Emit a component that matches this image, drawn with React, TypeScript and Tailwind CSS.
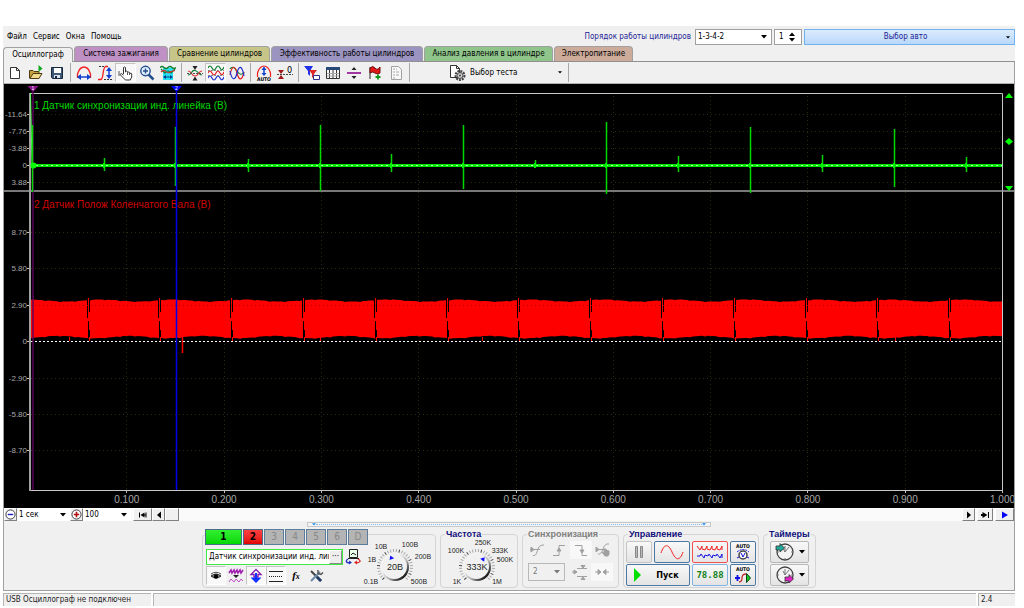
import type { ReactNode } from "react";
import { clsx } from "clsx";

const TABS = [
  { title: "Осциллограф", color: "bg-[#f0f0f0]", width: "w-[70px]" },
  { title: "Система зажигания", color: "bg-[#bf90c4]", width: "w-[94px]" },
  { title: "Сравнение цилиндров", color: "bg-[#c8c588]", width: "w-[101px]" },
  {
    title: "Эффективность работы цилиндров",
    color: "bg-[#9c94c0]",
    width: "w-[152px]",
  },
  {
    title: "Анализ давления в цилиндре",
    color: "bg-[#8fc48b]",
    width: "w-[129px]",
  },
  { title: "Электропитание", color: "bg-[#cdab9b]", width: "w-[79px]" },
];

const Icon = ({ children, box = "0 0 16 16", className = "size-4" }: {
  children: ReactNode;
  box?: string;
  className?: string;
}) => (
  <svg viewBox={box} className={clsx("shrink-0", className)} fill="none">
    {children}
  </svg>
);

const Arrow = ({ className, small }: { className?: string; small?: boolean }) => (
  <svg
    viewBox="0 0 6 4"
    className={clsx(
      "pointer-events-none shrink-0",
      small ? "h-[3px] w-1" : "h-1 w-1.5",
      className,
    )}
  >
    <path d="M0 0h6L3 3.5z" fill="currentColor" />
  </svg>
);

const ToolButton = ({ label, pressed, narrow, children }: {
  label: string;
  pressed?: boolean;
  narrow?: boolean;
  children: ReactNode;
}) => (
  <button
    type="button"
    aria-label={label}
    className={clsx(
      "flex h-[19px] items-center justify-center",
      narrow ? "w-5" : "w-[21px]",
      pressed && "border border-[#c4c4c4] border-r-white border-b-white bg-[#f8f8f8]",
    )}
  >
    {children}
  </button>
);

const Separator = () => (
  <div className="flex h-[19px] w-1.5 justify-center">
    <div className="w-px bg-[#a8a8a8]" />
  </div>
);

const Dropdown = ({ label, options, className, disabled }: {
  label: string;
  options: string[];
  className: string;
  disabled?: boolean;
}) => (
  <div className={clsx("relative flex items-center", className)}>
    <select
      aria-label={label}
      disabled={disabled}
      className="size-full appearance-none bg-transparent pl-0.5 outline-none"
    >
      {options.map((option) => (
        <option key={option}>{option}</option>
      ))}
    </select>
    <Arrow className="absolute right-1" />
  </div>
);

const Header = () => (
  <header className="flex h-5 items-center pt-0.5">
    <nav className="flex gap-1.5 pl-1">
      {["Файл", "Сервис", "Окна", "Помощь"].map((item) => (
        <button key={item} type="button">
          {item}
        </button>
      ))}
    </nav>
    <span className="ml-auto pr-1 text-[#1c1c96]">
      Порядок работы цилиндров
    </span>
    <Dropdown
      label="Порядок работы цилиндров"
      options={["1-3-4-2", "1-2-4-3"]}
      className="h-4 w-[77px] border border-[#a0a0a0] bg-white"
    />
    <div className="ml-0.5 flex h-4 w-7 items-center border border-[#a0a0a0] bg-white">
      <input
        aria-label="Номер цилиндра"
        defaultValue="1"
        className="w-3.5 pl-1 outline-none"
      />
      <div className="flex flex-col gap-0.5">
        <button type="button" aria-label="Больше">
          <Arrow className="rotate-180" />
        </button>
        <button type="button" aria-label="Меньше">
          <Arrow />
        </button>
      </div>
    </div>
    <button
      type="button"
      className="ml-0.5 flex h-4 w-[211px] items-center border border-[#6fb2ee] bg-linear-to-b from-[#dcebfc] to-[#b9d8fb] pr-1 text-[#1c1c96]"
    >
      <span className="flex-1">Выбор авто</span>
      <Arrow small className="text-black" />
    </button>
  </header>
);

const Tabs = () => (
  <div role="tablist" className="flex h-4 items-end border-b border-[#909090]">
    {TABS.map((tab, index) => (
      <button
        key={tab.title}
        type="button"
        role="tab"
        aria-selected={index === 0}
        className={clsx(
          "h-[15px] rounded-t-sm border border-b-0 border-[#a0a0a0] whitespace-nowrap",
          tab.color,
          tab.width,
          index === 0 ? "-mb-px h-4" : "ml-px",
        )}
      >
        {tab.title}
      </button>
    ))}
  </div>
);

const Toolbar = () => (
  <div className="flex h-[22px] items-center border-b border-[#b0b0b0]">
    <ToolButton label="Новый">
      <Icon>
        <path d="M3.500 2.500h6l3 3v8h-9z" fill="#fff" stroke="#333" />
        <path d="M9.500 2.500v3h3" stroke="#333" />
      </Icon>
    </ToolButton>
    <ToolButton label="Открыть">
      <Icon>
        <path d="M1.500 13V5.500h3.500l1 1h5V13z" fill="#c8a03c" stroke="#4b3b10" />
        <path d="M2 13.500l3-5h9l-3 5z" fill="#efd98a" stroke="#4b3b10" />
        <path d="M10.500 0v7l4-3.500z" fill="#10a820" />
      </Icon>
    </ToolButton>
    <ToolButton label="Сохранить">
      <Icon>
        <path d="M2.500 2.500h11v11h-10l-1-1z" fill="#405878" stroke="#18283c" />
        <path d="M5 3h7v5H5z" fill="#fff" />
        <path d="M5 10h6v3H5z" fill="#dde4ee" />
        <path d="M6 11h2v2H6z" fill="#18283c" />
      </Icon>
    </ToolButton>
    <Separator />
    <ToolButton label="Масштаб по горизонтали">
      <Icon>
        <path d="M1.500 13V9C3 4 5.500 2 8 2s5 2 6.500 7v4" stroke="#f02020" strokeWidth="1.300" />
        <path d="M3 12h10" stroke="#1040d0" strokeWidth="1.500" />
        <path d="M1 12l4-3v6zM15 12l-4-3v6z" fill="#1040d0" />
      </Icon>
    </ToolButton>
    <ToolButton label="Масштаб по вертикали">
      <Icon>
        <path d="M1 14.500h3C7 13 5 4 8.500 1.500H11" stroke="#f02020" strokeWidth="1.300" />
        <path d="M2 1.500h6M7 14.500h8" stroke="#333" strokeDasharray="2 1" />
        <path d="M12 4v8" stroke="#1040d0" strokeWidth="1.500" />
        <path d="M12 2l3 4H9zM12 14l3-4H9z" fill="#1040d0" />
      </Icon>
    </ToolButton>
    <ToolButton label="Рука" pressed>
      <Icon>
        <path
          d="M5.500 9V2.500q1-1 2 0V7q1-1.500 2-.5v1q1.500-1 2 0v1q2-1 2.200.500V12l-1.500 3H7.500L2 9.500Q3 7.500 5.500 10"
          fill="#fff"
          stroke="#333"
        />
        <path d="M9.500 8v2M11.500 8v2M1 6v5" stroke="#555" />
      </Icon>
    </ToolButton>
    <ToolButton label="Лупа">
      <Icon>
        <path d="M9 9l5.500 5.500" stroke="#24508c" strokeWidth="2.500" />
        <circle cx="6.500" cy="6" r="4.700" fill="#e4f0ff" stroke="#24508c" strokeWidth="1.400" />
        <path d="M4 6h5M6.500 3.500v5" stroke="#24508c" strokeWidth="1.400" />
      </Icon>
    </ToolButton>
    <ToolButton label="Измерения">
      <Icon>
        <path d="M3 3h10v12H3z" fill="#22e0f4" />
        <path d="M0 2.500q2-2 4 0t4 0t4 0t4 0" stroke="#108030" strokeWidth="1.400" />
        <path d="M1 4l4 4q3-4 6 0l4-4" stroke="#108030" strokeWidth="1.200" />
        <path d="M1 7q3-3 5-.5t5 0l4-1" stroke="#d03030" strokeWidth="1.200" />
        <path d="M5 12h6" stroke="#083c90" />
        <path d="M3 12l3-2v4zM13 12l-3-2v4z" fill="#083c90" />
      </Icon>
    </ToolButton>
    <Separator />
    <ToolButton label="Совместить по центру">
      <Icon>
        <path d="M1 10q2 0 3.500-2.500T8 5.500t3.500 2.500t3.500 2" stroke="#108030" strokeWidth="1.200" />
        <path d="M1 6q2 0 3.500 2.500T8 11t3.500-2.500T15 6" stroke="#e03030" strokeWidth="1.200" />
        <path d="M0 8.500h16" stroke="#555" strokeDasharray="2 1" />
        <path d="M8 5L5.500 1h5zM8 11.500l-2.500 4h5z" fill="#222" />
      </Icon>
    </ToolButton>
    <ToolButton label="Раздельно" pressed>
      <Icon>
        <path d="M0 3q2-4 4 0t4 0t4 0t4-1" stroke="#108030" strokeWidth="1.200" />
        <path d="M0 8q2-4 4 0t4 0t4 0t4-1" stroke="#e02020" strokeWidth="1.200" />
        <path d="M0 13q2-4 4 0t4 0t4 0t4-1" stroke="#2030d0" strokeWidth="1.200" />
        <path d="M0 5.500h16M0 10.500h16" stroke="#888" strokeDasharray="2 1" />
      </Icon>
    </ToolButton>
    <ToolButton label="Наложение">
      <Icon>
        <path d="M1 4q3-4 7 2t7 1" stroke="#108030" strokeWidth="1.200" />
        <path d="M1 10C3 0 6 0 8 8s5 8 7-1" stroke="#e02020" strokeWidth="1.200" />
        <path d="M1 6c2 10 5 10 7 2s5-8 7 3" stroke="#2030d0" strokeWidth="1.200" />
      </Icon>
    </ToolButton>
    <Separator />
    <ToolButton label="Автомасштаб">
      <Icon>
        <path d="M1.500 12V8C3 3 5.500 1 8 1s5 2 6.500 7v4" stroke="#f02020" strokeWidth="1.200" />
        <path d="M8 4v5" stroke="#1040d0" strokeWidth="1.500" />
        <path d="M8 1.500L10.500 5h-5zM8 11l2.500-3h-5z" fill="#1040d0" />
        <text x="8" y="16" textAnchor="middle" className="fill-black text-[5px] font-bold">
          AUTO
        </text>
      </Icon>
    </ToolButton>
    <ToolButton label="Ноль">
      <Icon>
        <path d="M0 9.500h16" stroke="#444" strokeDasharray="2 1" />
        <path d="M4 9L1 5h6zM4 10l-3 4h6z" fill="#a01818" />
        <text x="10" y="8" className="fill-black text-[9px]">
          0
        </text>
      </Icon>
    </ToolButton>
    <Separator />
    <ToolButton label="Фильтр">
      <Icon>
        <path d="M0 1h9L6 6v5L4 9V6z" fill="#2030e8" />
        <path d="M5 5h8l-3 4v5l-2-2V9z" fill="#e02828" />
        <path d="M9.500 10.500h6v4h-6z" fill="#fff" stroke="#30308c" />
      </Icon>
    </ToolButton>
    <ToolButton label="Таблица">
      <Icon>
        <path d="M1.500 2.500h13v11h-13z" fill="#fff" stroke="#333" />
        <path d="M1 2h14v3H1z" fill="#284878" />
        <path d="M4.500 5v9M8 5v9M11.500 5v9" stroke="#333" />
        <path d="M2 8.500h12M2 11h12" stroke="#aaa" />
      </Icon>
    </ToolButton>
    <ToolButton label="Разделить">
      <Icon>
        <path d="M1 8h14" stroke="#982098" strokeWidth="1.800" />
        <path d="M8 2l2.500 3h-5zM8 14l2.500-3h-5z" fill="#222" />
      </Icon>
    </ToolButton>
    <ToolButton label="Добавить метку">
      <Icon>
        <path d="M3 2v12" stroke="#222" />
        <path d="M3 3q3-3 5 0t5-1v6q-3 2-5 0T3 8z" fill="#e01818" stroke="#701010" />
        <path d="M11 9.500v5M8.500 12h5" stroke="#109820" strokeWidth="1.800" />
      </Icon>
    </ToolButton>
    <ToolButton label="Отчёт">
      <Icon>
        <path d="M3.500 1.500h7l3 3v10h-10z" fill="#f8f8f8" stroke="#a0a0a0" />
        <path d="M5 4h2M5 7h2M5 10h2M5 13h2M8 4h1M8 7h3M8 10h3" stroke="#a8a8a8" />
      </Icon>
    </ToolButton>
    <Separator />
    <button type="button" className="ml-9 flex h-[19px] items-center gap-1">
      <Icon box="0 0 18 16" className="h-4 w-[18px]">
        <path d="M2.500.500h6l3 3v9h-9z" fill="#fff" stroke="#333" />
        <path d="M8.500.500v3h3" stroke="#333" />
        <circle cx="12" cy="10.500" r="4.500" stroke="#444" strokeWidth="2" strokeDasharray="2 1" />
        <circle cx="12" cy="10.500" r="3" fill="#ccc" stroke="#444" />
        <circle cx="12" cy="10.500" r="1" fill="#444" />
      </Icon>
      Выбор теста
      <Arrow small className="mr-1 ml-9" />
    </button>
    <Separator />
  </div>
);

const SYNC_SCALE = [
  { value: "-11.64", y: 114 },
  { value: "-7.76", y: 131 },
  { value: "-3.88", y: 148 },
  { value: "0", y: 165 },
  { value: "3.88", y: 182 },
];

const CRANK_SCALE = [
  { value: "8.70", y: 232 },
  { value: "5.80", y: 268 },
  { value: "2.90", y: 305 },
  { value: "0", y: 341 },
  { value: "-2.90", y: 378 },
  { value: "-5.80", y: 414 },
  { value: "-8.70", y: 450 },
];

// x, top, bottom
const SYNC_PULSES = [
  [32, 125, 192],
  [104, 158, 171],
  [175, 127, 186],
  [248, 159, 172],
  [320, 125, 191],
  [391, 154, 172],
  [463, 125, 189],
  [535, 160, 166],
  [606, 122, 194],
  [678, 156, 172],
  [750, 127, 193],
  [822, 155, 172],
  [894, 129, 187],
  [966, 157, 172],
];

const TIME_MARKS = Array.from({ length: 10 }, (_, i) => ({
  label: `${((i + 1) / 10).toFixed(3)}`,
  x: 29.5 + (i + 1) * 97.3,
}));

const GAPS = Array.from({ length: 13 }, (_, i) => Math.floor(88 + i * 71.8) + 0.5);

const crankOutline = () => {
  const top: string[] = [];
  const bottom: string[] = [];
  for (let x = 30; x <= 1002; x += 3) {
    const phase = ((x - 16) % 71.8) / 71.8;
    const jitter = (x * 7) % 5 === 0 ? 0.6 : 0;
    top.push(`${x},${(300.5 + Math.sin(phase * 6.2 + 3.6) + jitter).toFixed(1)}`);
    bottom.unshift(
      `${x},${(337 + Math.sin(phase * 6.2 + 1) * 1.2 + jitter).toFixed(1)}`,
    );
  }
  return [...top, ...bottom].join(" ");
};

const Chart = () => (
  <svg
    viewBox="4 84 1010 424"
    className="block w-full bg-black font-['Liberation_Sans',sans-serif]"
  >
    {/* grid */}
    <g stroke="#2c2c0c" strokeDasharray="1 3">
      {[...SYNC_SCALE, ...CRANK_SCALE].map(({ y }) => (
        <path key={y} d={`M31 ${y + 0.5}H1002`} />
      ))}
      {TIME_MARKS.map(({ x }) => (
        <path key={x} d={`M${Math.floor(x) + 0.5} 96V490`} />
      ))}
    </g>
    <g className="fill-[#a8a8a8] text-[8px]">
      {[...SYNC_SCALE, ...CRANK_SCALE].map(({ value, y }) => (
        <g key={y}>
          <text x="27" y={y + 3} textAnchor="end">
            {value}
          </text>
          <path d={`M27 ${y + 0.5}h4`} stroke="#c0c0c0" />
        </g>
      ))}
    </g>
    <g className="fill-[#a8a8a8] text-[10px]">
      {TIME_MARKS.map(({ label, x }) => (
        <g key={label}>
          <text x={x} y="503" textAnchor="middle">
            {label}
          </text>
          <path d={`M${Math.floor(x) + 0.5} 490v3`} stroke="#c0c0c0" />
        </g>
      ))}
    </g>

    {/* channel 2 */}
    <polygon points={crankOutline()} fill="#ff0000" />
    {GAPS.map((x) => (
      <g key={x}>
        <path
          d={`M${x - 1} 299v19M${x + 1} 299v13M${x} 321v17M${x + 1} 330v7`}
          stroke="#000"
        />
        <path d={`M${x} 298v8M${x + 1} 337v4`} stroke="#ff0000" />
      </g>
    ))}
    <path d="M69.500 337v4M320.500 337v5M482.500 337v4M895.500 337v4" stroke="#ff0000" />
    <path d="M182.500 337v16" stroke="#ff0000" strokeWidth="1.500" />
    <path d="M31 341.500H1002" stroke="#ffffff" strokeDasharray="2 2" />
    <path d="M31 305.500H1002" stroke="#b00000" strokeDasharray="1 3" />
    <text x="34" y="208" className="fill-[#d00000] text-[10px]">
      2 Датчик Полож Коленчатого Вала (В)
    </text>

    {/* frame */}
    <path d="M30 93.500H1002.500V490.500H30" stroke="#c8c8c8" fill="none" />
    <path d="M30 93V491" stroke="#a0a0a0" strokeWidth="2" />
    <path d="M4 191H1014" stroke="#a0a0a0" strokeWidth="1.500" />
    <path d="M33 92V490" stroke="#600060" strokeOpacity="0.700" strokeWidth="2" />

    {/* channel 1 */}
    <path d="M30.500 93L32 165" stroke="#60ff60" />
    <path d="M31 165.500H1002" stroke="#00e800" strokeWidth="3" />
    <path d="M31 165.500H1002" stroke="#a8ffa8" strokeDasharray="2 3" />
    {SYNC_PULSES.map(([x, top, bottom]) => (
      <g key={x}>
        <path
          d={`M${x + 0.5} ${top}V${bottom}`}
          stroke="#00d800"
          strokeWidth="1.500"
        />
        <path d={`M${x} 163v5`} stroke="#00f000" strokeWidth="2" />
      </g>
    ))}
    <text x="34" y="109" className="fill-[#00d800] text-[10px]">
      1 Датчик синхронизации инд. линейка (В)
    </text>
    <circle cx="33.500" cy="165.500" r="3" fill="#00ff00" />

    {/* markers */}
    <path d="M176.500 92V490" stroke="#0000e8" strokeWidth="1.500" />
    <path d="M27.500 86h11L33 92z" fill="#8c148c" />
    <path d="M171 86h11l-5.500 6z" fill="#0000ff" />
    <g className="fill-white text-[5px]" textAnchor="middle">
      <text x="33" y="90">1</text>
      <text x="176.500" y="90">2</text>
    </g>
    <path
      d="M1009 93l4 5h-8zM1009 138l4 3.500-4 3.500-4-3.500zM1009 191l4-5h-8z"
      fill="#00ff00"
    />
  </svg>
);

const FlatButton = ({ label, width, children }: {
  label: string;
  width: string;
  children: ReactNode;
}) => (
  <button
    type="button"
    aria-label={label}
    className={clsx(
      "flex h-[13px] items-center justify-center border border-white border-r-[#808080] border-b-[#808080] bg-[#f0f0f0]",
      width,
    )}
  >
    {children}
  </button>
);

const ScrollRow = () => (
  <div className="flex h-[13px] items-center bg-[#fafafa]">
    <FlatButton label="Уменьшить" width="w-[13px]">
      <Icon box="0 0 12 12" className="size-[11px]">
        <circle cx="6" cy="6" r="5" fill="#fff" stroke="#333" />
        <path d="M3 6h6" stroke="#1818c0" strokeWidth="1.500" />
      </Icon>
    </FlatButton>
    <Dropdown
      label="Развёртка"
      options={["1 сек", "2 сек"]}
      className="h-[13px] w-[53px] bg-white"
    />
    <FlatButton label="Увеличить" width="w-[13px]">
      <Icon box="0 0 12 12" className="size-[11px]">
        <circle cx="6" cy="6" r="5" fill="#fff" stroke="#333" />
        <path d="M3 6h6M6 3v6" stroke="#b01010" strokeWidth="1.800" />
      </Icon>
    </FlatButton>
    <Dropdown
      label="Масштаб"
      options={["100", "200"]}
      className="mr-0.5 h-[13px] w-12 bg-white"
    />
    <FlatButton label="В начало" width="w-[19px]">
      <Icon box="0 0 10 8" className="h-2 w-2.5">
        <path d="M1 1.500h1v5H1zM2.500 4l4-2.500v2h1v-2h1v5h-1v-2h-1v2z" fill="#000" />
      </Icon>
    </FlatButton>
    <FlatButton label="Назад" width="w-[13px]">
      <Icon box="0 0 6 8" className="h-2 w-1.5">
        <path d="M1 4l4-3.500v7z" fill="#000" />
      </Icon>
    </FlatButton>
    <FlatButton label="Позиция" width="w-3.5">
      {null}
    </FlatButton>
    <div className="ml-auto flex gap-0.5">
      <FlatButton label="Вперёд" width="w-[13px]">
        <Icon box="0 0 6 8" className="h-2 w-1.5">
          <path d="M5 4L1 .500v7z" fill="#000" />
        </Icon>
      </FlatButton>
      <FlatButton label="В конец" width="w-4">
        <Icon box="0 0 10 8" className="h-2 w-2.5">
          <path d="M8 1h1v6H8zM7.500 4L2.500 1v2H1v2h1.500v2z" fill="#000" />
        </Icon>
      </FlatButton>
      <FlatButton label="Воспроизвести" width="w-[19px]">
        <Icon box="0 0 8 8" className="size-2">
          <path d="M7 4L1 .500v7z" fill="#0000ff" />
        </Icon>
      </FlatButton>
    </div>
  </div>
);

const Splitter = () => (
  <div className="mx-auto mt-px flex h-[5px] w-[404px] items-center justify-between border border-[#c8c8c8] bg-[#f4f4f4] px-1">
    <Arrow small className="text-[#2090f0]" />
    <div className="h-px flex-1 border-t border-dotted border-[#80bcf0]" />
    <Arrow small className="text-[#2090f0]" />
  </div>
);

interface IKnobProps {
  value: string;
  angle: number;
  marks: { text: string; x: number; y: number }[];
}

// Both knobs turn through 270 degrees, starting at the lower left
const Knob = ({ value, angle, marks }: IKnobProps) => (
  <svg
    viewBox="0 0 72 48"
    className="h-12 w-[72px] shrink-0 font-['Liberation_Sans',sans-serif]"
  >
    <defs>
      <linearGradient id={`rim-${value}`} x1="0" y1="0" x2="1" y2="1">
        <stop offset="0.350" stopColor="#f4f4f4" />
        <stop offset="0.600" stopColor="#b0b0b0" />
        <stop offset="0.850" stopColor="#101010" />
      </linearGradient>
    </defs>
    {Array.from({ length: 28 }, (_, i) => (
      <path
        key={i}
        d="M0 -15v-3"
        stroke={i % 5 === 0 ? "#404040" : "#a8a8a8"}
        transform={`translate(34 28) rotate(${-135 + i * 10})`}
      />
    ))}
    <circle cx="34" cy="28" r="14" fill={`url(#rim-${value})`} />
    <circle cx="33.500" cy="27.500" r="12.500" fill="#f1f1f1" />
    <path
      d="M-2.500 -8.500h5l-2.500 -4z"
      fill="#1010ff"
      transform={`translate(34 28) rotate(${angle})`}
    />
    <text x="34" y="31" textAnchor="middle" className="fill-[#222] text-[9px]">
      {value}
    </text>
    <g className="fill-[#222] text-[7px]" textAnchor="middle">
      {marks.map(({ text, x, y }) => (
        <text key={text} x={x} y={y}>
          {text}
        </text>
      ))}
    </g>
  </svg>
);

const CHANNELS = ["3", "4", "5", "6", "D"];

const ChannelGroup = () => (
  <fieldset className="flex h-[59px] rounded border border-[#d4d4d4] px-0.5">
    <legend className="ml-0 flex h-[10px] gap-px text-[10px]">
      <button
        type="button"
        className="h-4 w-[37px] border border-[#4c6c8c] bg-linear-to-b from-[#30f030] to-[#00d800] font-bold"
      >
        1
      </button>
      <button
        type="button"
        className="h-4 w-5 border border-[#4c6c8c] bg-linear-to-b from-[#ff4040] to-[#e00000] font-bold"
      >
        2
      </button>
      {CHANNELS.map((channel) => (
        <button
          key={channel}
          type="button"
          className="h-4 w-5 border border-[#5c7c9c] bg-[#b4b4b4] text-[#888]"
        >
          {channel}
        </button>
      ))}
    </legend>
    <div className="flex w-[138px] flex-col gap-px pt-2.5 pl-px">
      <div className="flex h-4 border border-[#40e840] bg-white">
        <input
          aria-label="Датчик"
          defaultValue="Датчик синхронизации инд. линейка"
          className="min-w-0 flex-1 pl-0.5 outline-none"
        />
        <button
          type="button"
          className="w-[13px] border border-white border-r-[#888] border-b-[#888] bg-[#eee] leading-none"
        >
          ···
        </button>
      </div>
      <div className="flex">
        <ToolButton label="Показать" pressed narrow>
          <Icon>
            <path d="M3 8q5-4 10 0q-5 4-10 0z" fill="#888" stroke="#222" />
            <circle cx="8" cy="8.500" r="2.200" fill="#000" />
            <path d="M3 6q5-3.500 10 0" stroke="#555" />
          </Icon>
        </ToolButton>
        <ToolButton label="Инвертировать" narrow>
          <Icon>
            <path d="M1 5l2-3 1 3 2-3 1 3 2-3 1 3 2-3 1 3 2-3" stroke="#a020b0" strokeWidth="1.600" />
            <path d="M1 14l2-3 3 3 2-3 3 3 2-3 2 2" stroke="#c050c8" />
            <path d="M5 7h6l-3 3z" fill="#222" />
          </Icon>
        </ToolButton>
        <ToolButton label="Смещение" pressed narrow>
          <Icon>
            <path d="M3 6.500L8 1.500l5 5h-3V9H6V6.500z" stroke="#8820b0" fill="#fff" strokeWidth="1.400" />
            <path d="M2.500 9.500h11L8 15z" fill="#1030ff" />
            <path d="M8 5v6" stroke="#1030ff" strokeWidth="2" />
          </Icon>
        </ToolButton>
        <ToolButton label="Линии" pressed narrow>
          <Icon>
            <path d="M1 3.500h14M1 13.500h14" stroke="#222" />
            <path d="M1 8.500h14" stroke="#222" strokeDasharray="1 1" />
          </Icon>
        </ToolButton>
        <ToolButton label="Функция" narrow>
          <span className="font-['Liberation_Serif',serif] text-[11px] font-bold italic">
            f<span className="text-[8px]">x</span>
          </span>
        </ToolButton>
        <ToolButton label="Настройки" narrow>
          <Icon>
            <path d="M3 3l10 10" stroke="#444" strokeWidth="2" />
            <path d="M9 9l4 4" stroke="#223c68" strokeWidth="3" />
            <path d="M12 4l-9 9" stroke="#6888a8" strokeWidth="2" />
            <path d="M10 2v3.500l3 1 2-2" stroke="#555" strokeWidth="1.500" />
          </Icon>
        </ToolButton>
      </div>
    </div>
    <button
      type="button"
      aria-label="Сменить датчик"
      className="mt-2.5 ml-0.5 h-4 w-4 shrink-0"
    >
      <Icon>
        <path d="M4.500.500h8v8h-8z" fill="#e8ffe8" stroke="#222" />
        <path d="M6 6l2-2 3 2M3 9.500h11" stroke="#222" />
        <path d="M3 10Q-1 13 4 14" stroke="#2030c0" strokeWidth="1.300" />
        <path d="M13 10q5 3-2 4" stroke="#e02020" strokeWidth="1.300" />
        <path d="M4 11.500v4l3-2z" fill="#2030c0" />
        <path d="M12 11.500v4l-3-2z" fill="#e02020" />
      </Icon>
    </button>
    <Knob
      value="20В"
      angle={-22}
      marks={[
        { text: "10В", x: 20, y: 10 },
        { text: "100В", x: 49, y: 8 },
        { text: "1В", x: 11, y: 23 },
        { text: "200В", x: 62, y: 20 },
        { text: "0.1В", x: 10, y: 45 },
        { text: "500В", x: 58, y: 45 },
      ]}
    />
  </fieldset>
);

const Group = ({ title, muted, children }: {
  title: string;
  muted?: boolean;
  children: ReactNode;
}) => (
  <fieldset className="h-[59px] rounded border border-[#d4d4d4] px-0.5">
    <legend
      className={clsx(
        "ml-0.5 h-[10px] px-px font-['Liberation_Sans',sans-serif] text-[9px] leading-[10px] font-bold",
        muted ? "text-[#808080]" : "text-[#10107c]",
      )}
    >
      {title}
    </legend>
    {children}
  </fieldset>
);

const MutedButton = ({ label, lit, children }: {
  label: string;
  lit?: boolean;
  children: ReactNode;
}) => (
  <button
    type="button"
    disabled
    aria-label={label}
    className={clsx(
      "flex h-[18px] w-[22px] items-center justify-center",
      lit && "bg-[#f8f8f8]",
    )}
  >
    <Icon>
      <g stroke="#a0a0a0">{children}</g>
    </Icon>
  </button>
);

const SyncGroup = () => (
  <Group title="Синхронизация" muted>
    <div className="flex w-[91px] flex-wrap gap-y-1 pt-0.5 pl-px">
      <MutedButton label="Уровень">
        <path d="M2 5v5l3-2.500z" fill="#a0a0a0" />
        <path d="M1 7.500h10M4 13.500q3 1 4.500-5T15 3" />
      </MutedButton>
      <MutedButton label="По фронту">
        <path d="M2 13.500h6v-10h6" />
        <path d="M6 9l2-3 2 3z" fill="#a0a0a0" />
      </MutedButton>
      <MutedButton label="По спаду" lit>
        <path d="M2 3.500h7v10h5" />
        <path d="M7 8l2 3 2-3z" fill="#a0a0a0" />
      </MutedButton>
      <MutedButton label="Вручную">
        <path d="M1 5v5l3-2.500z" fill="#a0a0a0" />
        <path d="M1 7.500h10M3 12q3 1 5-5t6-5" />
        <path d="M9 7v4l-2-1 3 4h3l1-2V9l-3-1V7z" fill="#a0a0a0" />
      </MutedButton>
      <Dropdown
        label="Канал синхронизации"
        options={["2", "1"]}
        disabled
        className="mr-1 ml-0.5 h-[18px] w-[37px] border border-[#b8b8b8] pl-0.5 text-[#777]"
      />
      <MutedButton label="Порог">
        <path d="M0 8h5M5 4.500h10M5 12.500h10" />
        <path d="M2 6v4l3-2zM9 1.500h4l-2 2.500zM9 15.500h4L11 13z" fill="#a0a0a0" />
      </MutedButton>
      <MutedButton label="Сжать" lit>
        <path d="M1 8h6M15 8H9" />
        <path d="M4 5.500v5L7 8zM12 5.500v5L9 8z" fill="#a0a0a0" />
      </MutedButton>
    </div>
  </Group>
);

const PanelButton = ({ label, className, children }: {
  label: string;
  className: string;
  children: ReactNode;
}) => (
  <button
    type="button"
    aria-label={label}
    className={clsx(
      "flex h-[22px] items-center justify-center rounded-xs border bg-linear-to-b from-[#f8f8f8] to-[#e4e4e4]",
      className,
    )}
  >
    {children}
  </button>
);

const ControlGroup = () => (
  <Group title="Управление">
    <div className="flex flex-col gap-px pt-0.5">
      <div className="flex gap-0.5">
        <PanelButton label="Пауза" className="w-[26px] border-[#c4c4c4]">
          <Icon box="0 0 12 14" className="h-3.5 w-3">
            <path d="M2.500 1.500h2v11h-2zM7.500 1.500h2v11h-2z" fill="#bbb" stroke="#888" />
          </Icon>
        </PanelButton>
        <PanelButton label="Осциллограмма" className="w-9 border-[#4c78a4]">
          <Icon box="0 0 26 16" className="h-4 w-[26px]">
            <path d="M2 9C5 0 9-1 13 8s8 9 11 0" stroke="#f02020" />
          </Icon>
        </PanelButton>
        <PanelButton label="Самописец" className="w-9 border-[#f05050]">
          <Icon box="0 0 28 16" className="h-4 w-7">
            <path d="M1 2l3 4 2-4v3l3 1 2-4v3l3 1 2-4v3l3 1 2-4v3l3 1 2-4v4" stroke="#f02020" />
            <path d="M1 12h3l1-2 3 4 1-3 3 1 1-2 3 4 1-3 3 1 1-2 3 4 2-4v4" stroke="#1010e0" />
          </Icon>
        </PanelButton>
        <PanelButton label="Автонастройка" className="w-[26px] border-[#4c78a4]">
          <Icon box="0 0 18 18" className="size-[18px]">
            <text x="9" y="5" textAnchor="middle" className="fill-black text-[5px] font-bold">
              AUTO
            </text>
            <circle cx="9" cy="12" r="4" fill="#fff" stroke="#444" strokeWidth="1.500" />
            <path d="M3 9q6-5 12 0" stroke="#1010e0" strokeDasharray="2 1" />
            <path d="M7 10l2 4 2-4M3 15l2-1M15 15l-2-1" stroke="#1010e0" />
          </Icon>
        </PanelButton>
      </div>
      <div className="flex gap-0.5">
        <PanelButton label="Пуск" className="w-16 gap-3.5 border-[#4c78a4] pr-1">
          <Icon box="0 0 9 14" className="h-3.5 w-[9px]">
            <path d="M1 0l7 7-7 7z" fill="#00e000" />
          </Icon>
          <span className="text-[9px] font-bold">Пуск</span>
        </PanelButton>
        <PanelButton label="Мультиметр" className="w-9 border-[#80b4e4]">
          <span className="font-['DejaVu_Sans_Mono',monospace] text-[9px] font-bold text-[#108018]">
            78.88
          </span>
        </PanelButton>
        <PanelButton label="Автозапуск" className="w-[26px] border-[#4c78a4]">
          <Icon box="0 0 18 18" className="size-[18px]">
            <text x="9" y="5" textAnchor="middle" className="fill-black text-[5px] font-bold">
              AUTO
            </text>
            <path d="M1 12h5M3.500 9v6" stroke="#1010e0" strokeWidth="1.800" />
            <path d="M5 16q3 0 3-4t4-4" stroke="#c03030" strokeWidth="1.300" />
            <path d="M12.500 7.500v9l4-4.500z" fill="#10d020" stroke="#084010" />
          </Icon>
        </PanelButton>
      </div>
    </div>
  </Group>
);

const TimersGroup = () => (
  <Group title="Таймеры">
    <div className="flex flex-col gap-px px-1 pt-0.5">
      {[
        { label: "Таймер запуска", color: "#20a898", d: "M1 4h4V1.500L9.500 6 5 10V8H1z" },
        { label: "Таймер остановки", color: "#e020c8", d: "M10 12h4V9.500l4.500 4.500-4.500 4v-2h-4z" },
      ].map(({ label, color, d }) => (
        <PanelButton
          key={label}
          label={label}
          className="w-[39px] gap-1 border-[#b8b8b8]"
        >
          <Icon box="0 0 20 20" className="size-5">
            <circle cx="10" cy="10" r="8" fill="#f4f4f4" stroke="#444" strokeWidth="1.300" />
            <path d="M10 4v6l4-5M10 10l-2-4M10 16v1M3 10h1M16 10h1" stroke="#777" />
            <path d={d} fill={color} stroke="#333" strokeWidth="0.800" />
          </Icon>
          <Arrow />
        </PanelButton>
      ))}
    </div>
  </Group>
);

const ControlPanel = () => (
  <div className="h-[69px] border-b border-[#a0a0a0]">
    <Splitter />
    <div className="mt-0.5 flex justify-center gap-1">
      <ChannelGroup />
      <Group title="Частота">
        <Knob
          value="333K"
          angle={38}
          marks={[
            { text: "100K", x: 13, y: 14 },
            { text: "250K", x: 40, y: 6 },
            { text: "333K", x: 57, y: 14 },
            { text: "500K", x: 62, y: 23 },
            { text: "1K", x: 14, y: 45 },
            { text: "1M", x: 54, y: 45 },
          ]}
        />
      </Group>
      <SyncGroup />
      <ControlGroup />
      <TimersGroup />
    </div>
  </div>
);

const StatusBar = () => (
  <footer className="mt-0.5 flex h-[13px] gap-0.5 text-[#222]">
    <div className="w-[148px] border-t border-l border-[#b4b4b4] bg-[#f0f0f0] pl-0.5 whitespace-nowrap">
      USB Осциллограф не подключен
    </div>
    <div className="flex-1 border-t border-l border-[#b4b4b4] bg-[#f0f0f0]" />
    <div className="w-[37px] border-t border-l border-[#b4b4b4] bg-[#f0f0f0] pl-0.5">
      2.4
    </div>
  </footer>
);

export default function App() {
  return (
    <div className="min-h-screen bg-white pt-[26px] pr-[9px] pl-[3px] font-['DejaVu_Sans_Condensed','Liberation_Sans',sans-serif] text-[8px] leading-[12px] text-black">
      <main className="bg-[#f0f0f0]">
        <Header />
        <Tabs />
        <div className="border-x border-[#a0a0a0]">
          <Toolbar />
          <Chart />
          <ScrollRow />
          <ControlPanel />
        </div>
      </main>
      <StatusBar />
    </div>
  );
}
